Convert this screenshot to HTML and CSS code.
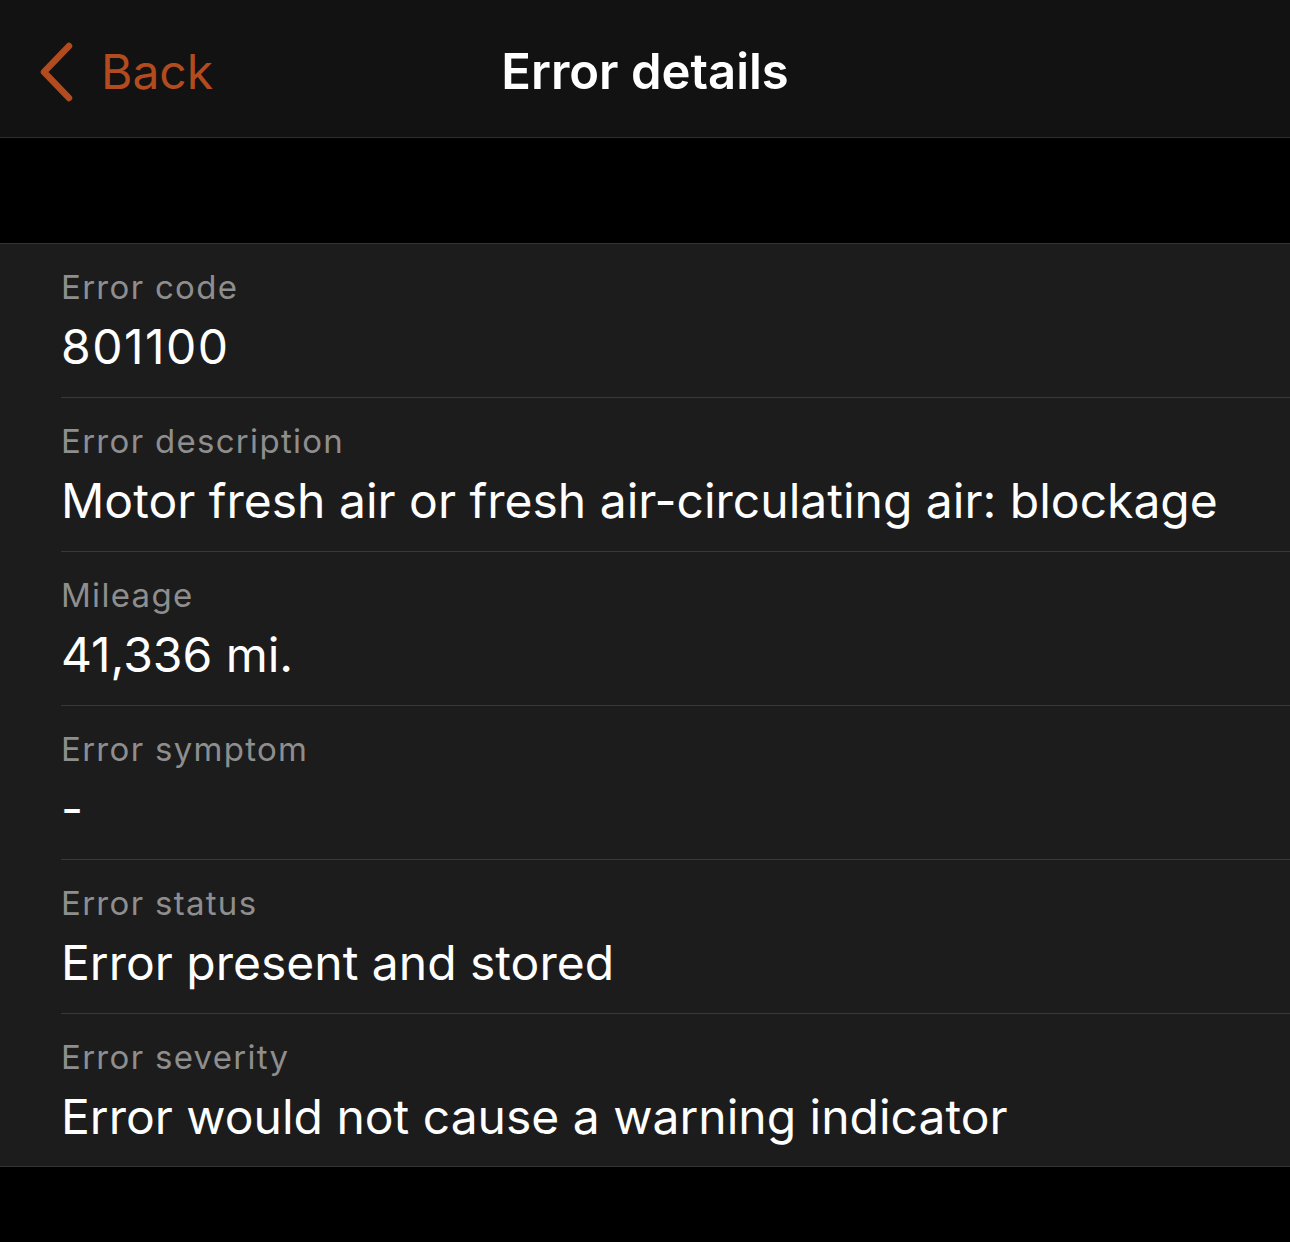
FILE: index.html
```html
<!DOCTYPE html>
<html>
<head>
<meta charset="utf-8">
<link rel="stylesheet" href="styles.css">
</head>
<body>
<header class="nav">
  <a class="back">
    <svg class="chev" width="40" height="64" viewBox="0 0 40 64"><path d="M32 6 L7 32 L32 58" fill="none" stroke="#b24b1d" stroke-width="6.5" stroke-linecap="round" stroke-linejoin="round"/></svg>
    <span>Back</span>
  </a>
  <h1 class="title">Error details</h1>
</header>
<div class="gap"></div>
<section class="list">
  <div class="row"><div class="label">Error code</div><div class="value num">801100</div></div>
  <div class="row"><div class="label">Error description</div><div class="value">Motor fresh air or fresh air-circulating air: blockage</div></div>
  <div class="row"><div class="label">Mileage</div><div class="value">41,336 mi.</div></div>
  <div class="row"><div class="label">Error symptom</div><div class="value">-</div></div>
  <div class="row"><div class="label">Error status</div><div class="value">Error present and stored</div></div>
  <div class="row"><div class="label">Error severity</div><div class="value">Error would not cause a warning indicator</div></div>
</section>
</body>
</html>
```
FILE: styles.css
```css
html, body {
  margin: 0;
  padding: 0;
  background: #000;
  font-family: Inter, "Noto Sans", sans-serif;
}
.nav {
  position: relative;
  height: 137px;
  background: #121212;
  border-bottom: 1px solid #2e2e2e;
  display: flex;
  align-items: center;
  justify-content: center;
}
.back {
  position: absolute;
  left: 37px;
  top: 40px;
  display: flex;
  align-items: center;
  gap: 24px;
  color: #b24b1d;
  font-size: 48px;
  line-height: 64px;
}
.chev { display: block; }
.title {
  margin: 0;
  color: #fff;
  font-size: 49px;
  font-weight: 600;
  line-height: 64px;
  margin-top: 6px;
}
.gap { height: 105px; }
.list {
  background: #1c1c1c;
  border-top: 1px solid #333;
  border-bottom: 1px solid #333;
}
.row {
  margin-left: 61px;
  padding: 21px 0 20px;
  border-bottom: 1px solid #383838;
}
.row:last-child { border-bottom: none; padding-bottom: 19px; }
.label {
  color: #8e8e8e;
  font-size: 33px;
  line-height: 44px;
  letter-spacing: 1.3px;
}
.value {
  color: #fff;
  font-size: 48px;
  line-height: 60px;
  margin-top: 8px;
}
.num { letter-spacing: 1.5px; }
```
